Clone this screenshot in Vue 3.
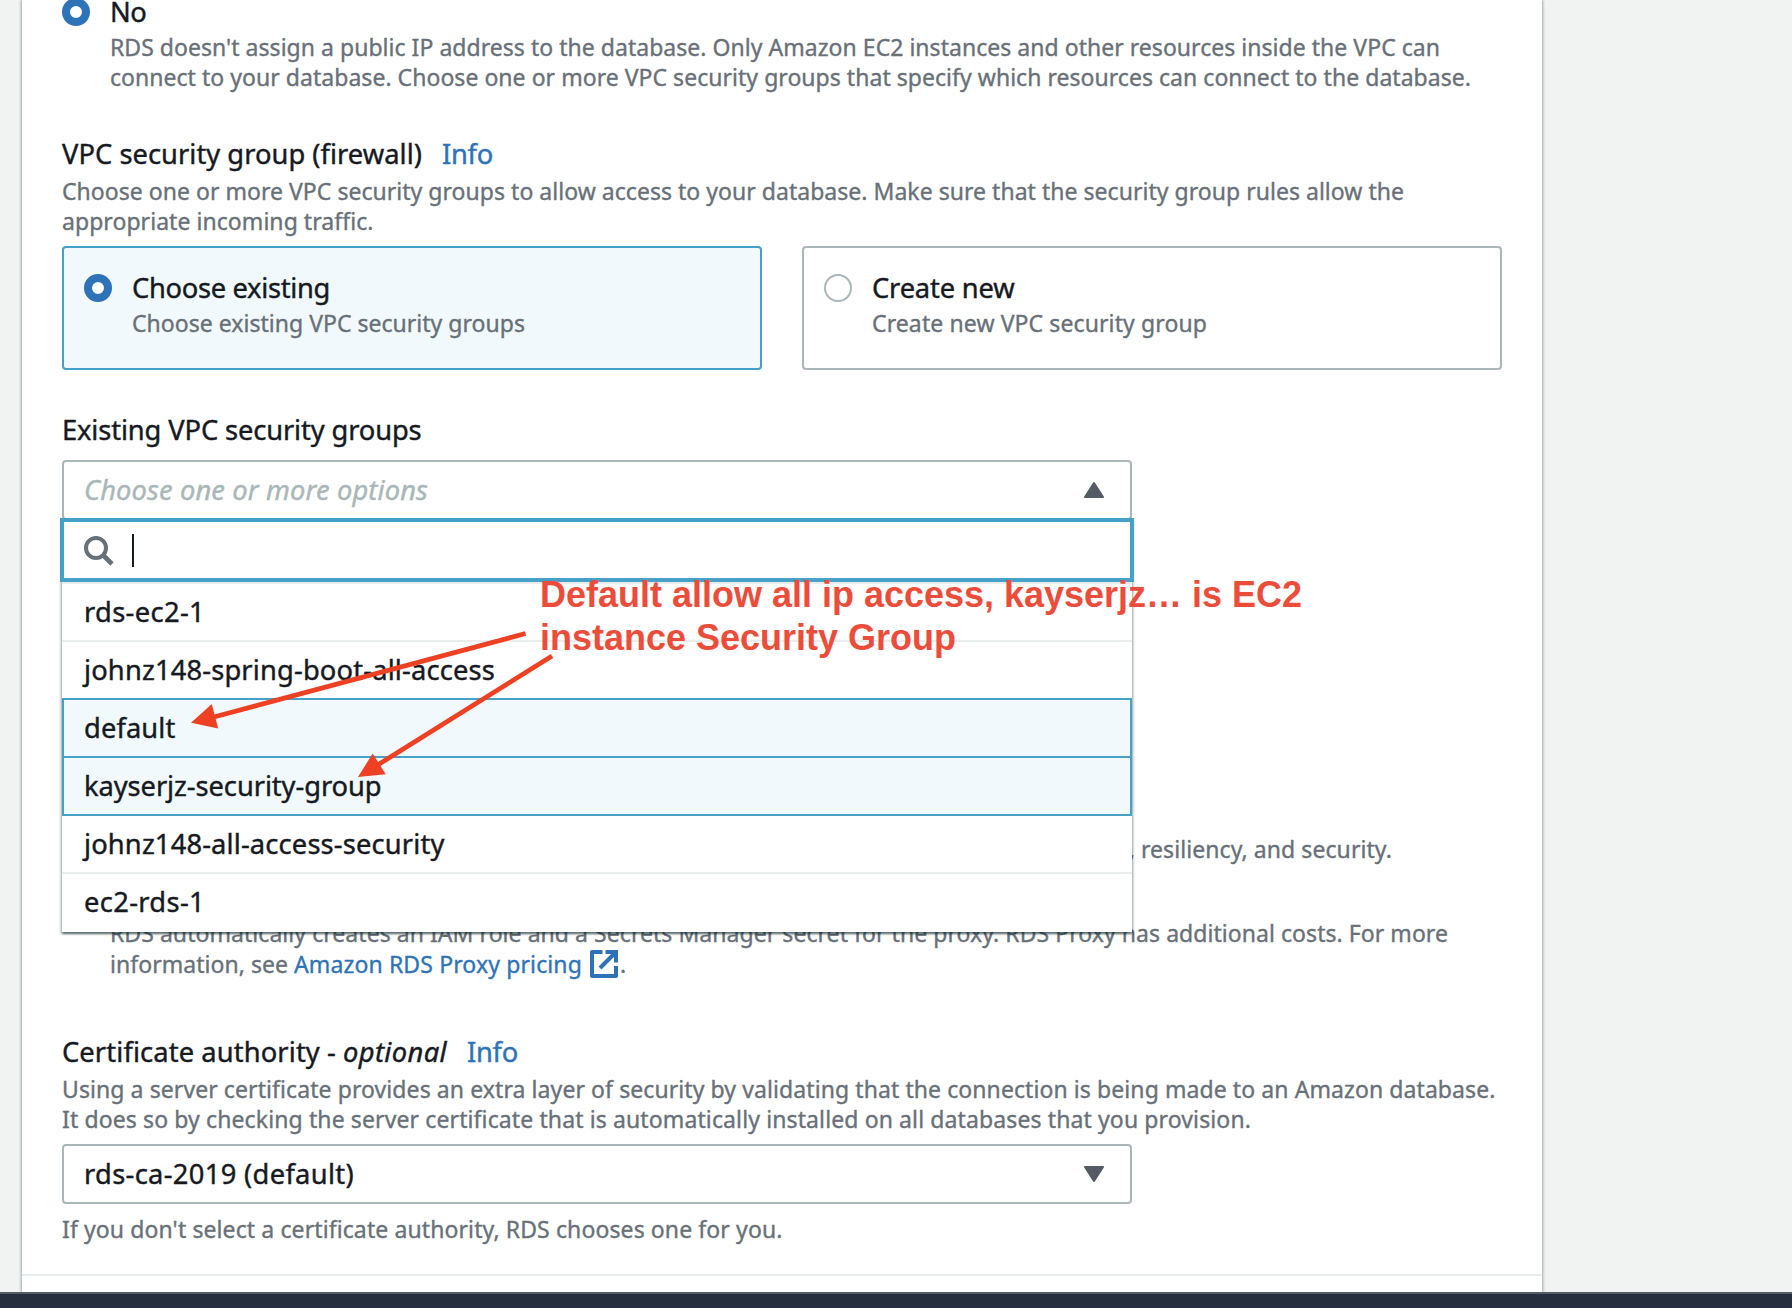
<script setup>
// Tracks a line of text so that it spans the given width in pixels.
const vFit = {
  mounted(el, { value }) {
    const natural = el.getBoundingClientRect().width
    el.style.letterSpacing = (value - natural) / el.textContent.length + 'px'
  },
}

const groups = [
  { name: 'rds-ec2-1', width: 121 },
  { name: 'johnz148-spring-boot-all-access', width: 411 },
  { name: 'default', width: 91.5, selected: true },
  { name: 'kayserjz-security-group', width: 297.5, selected: true },
  { name: 'johnz148-all-access-security', width: 360.5 },
  { name: 'ec2-rds-1', width: 121 },
]

const tiles = [
  { title: 'Choose existing', tw: 198, text: 'Choose existing VPC security groups', w: 393, on: true },
  { title: 'Create new', tw: 142.5, text: 'Create new VPC security group', w: 335, on: false },
]
</script>

<template>
  <div class="page">
    <main class="panel">
      <section class="choice">
        <span class="radio on"></span>
        <div class="choice-body">
          <div class="label"><span v-fit="36.5">No</span></div>
          <div class="desc gap-s">
            <span v-fit="1330">RDS doesn't assign a public IP address to the database. Only Amazon EC2 instances and other resources inside the VPC can</span>
          </div>
          <div class="desc">
            <span v-fit="1361">connect to your database. Choose one or more VPC security groups that specify which resources can connect to the database.</span>
          </div>
        </div>
      </section>

      <section class="firewall">
        <div class="label head">
          <span v-fit="360">VPC security group (firewall)</span>
          <a v-fit="51">Info</a>
        </div>
        <div class="desc"><span v-fit="1342">Choose one or more VPC security groups to allow access to your database. Make sure that the security group rules allow the</span></div>
        <div class="desc"><span v-fit="311.5">appropriate incoming traffic.</span></div>
        <div class="tiles">
          <div v-for="t in tiles" :key="t.title" class="tile" :class="{ active: t.on }">
            <span class="radio" :class="{ on: t.on }"></span>
            <div>
              <div class="label"><span v-fit="t.tw">{{ t.title }}</span></div>
              <div class="desc gap-s"><span v-fit="t.w">{{ t.text }}</span></div>
            </div>
          </div>
        </div>
      </section>

      <section class="existing">
        <div class="label"><span v-fit="359.5">Existing VPC security groups</span></div>
        <div class="select">
          <span v-fit="344" class="placeholder">Choose one or more options</span>
          <svg width="20" height="16" viewBox="0 0 20 16"><path d="M10 1 19 15H1Z" fill="#545b64" stroke="#545b64" stroke-width="2" stroke-linejoin="round" /></svg>
          <div class="dropdown">
            <div class="search">
              <svg width="30" height="30" viewBox="0 0 30 30" fill="none" stroke="#687078" stroke-width="4">
                <circle cx="12" cy="12" r="10" />
                <path d="M19 19 28 28" stroke-width="4.6" />
              </svg>
              <span class="caret"></span>
            </div>
            <div v-for="g in groups" :key="g.name" class="option label" :class="{ selected: g.selected }">
              <span v-fit="g.width">{{ g.name }}</span>
            </div>
          </div>
        </div>
      </section>

      <section class="proxy">
        <div class="desc scaling"><span v-fit="1326">RDS Proxy is a fully managed, highly available database proxy that improves application scalability, resiliency, and security.</span></div>
        <div class="proxy-note">
          <div class="desc"><span v-fit="1338">RDS automatically creates an IAM role and a Secrets Manager secret for the proxy. RDS Proxy has additional costs. For more</span></div>
          <div class="desc pricing">
            <span v-fit="178">information, see</span>
            <a v-fit="288">Amazon RDS Proxy pricing</a>
            <svg width="28" height="28" viewBox="0 0 28 28" fill="none" stroke="#2e73b8" stroke-width="4">
              <path d="M12.5 2H2V26H26V16" stroke-linejoin="round" />
              <path d="M15.5 2H26V12.5" />
              <path d="M25 3 10 18" />
            </svg>
            <span>.</span>
          </div>
        </div>
      </section>

      <section class="authority">
        <div class="label head">
          <span v-fit="274">Certificate authority -</span>
          <i v-fit="104">optional</i>
          <a v-fit="51">Info</a>
        </div>
        <div class="desc"><span v-fit="1433.5">Using a server certificate provides an extra layer of security by validating that the connection is being made to an Amazon database.</span></div>
        <div class="desc"><span v-fit="1189">It does so by checking the server certificate that is automatically installed on all databases that you provision.</span></div>
        <div class="select">
          <span v-fit="270" class="label">rds-ca-2019 (default)</span>
          <svg width="20" height="16" viewBox="0 0 20 16"><path d="M10 15 19 1H1Z" fill="#545b64" stroke="#545b64" stroke-width="2" stroke-linejoin="round" /></svg>
        </div>
        <div class="desc hint"><span v-fit="720.5">If you don't select a certificate authority, RDS chooses one for you.</span></div>
      </section>
    </main>
    <footer></footer>

    <svg class="arrows" width="1792" height="1308" viewBox="0 0 1792 1308">
      <g stroke="#ee4023" stroke-width="4.8">
        <path d="M525.5 633.5 212 717.5" />
        <path d="M552 656 376 766" />
      </g>
      <g fill="#ee4023">
        <path d="M191 722.8 211.8 704 218.2 728.4Z" />
        <path d="M358 777 372.7 753.5 385.7 774.2Z" />
      </g>
    </svg>
    <div class="remark">
      <div><span v-fit="762">Default allow all ip access, kayserjz… is EC2</span></div>
      <div><span v-fit="416">instance Security Group</span></div>
    </div>
  </div>
</template>

<style>
body {
  overflow: hidden;
}
</style>

<style scoped>
.page {
  position: relative;
  width: 1792px;
  height: 1308px;
  overflow: hidden;
  display: flex;
  flex-direction: column;
  background: #f1f3f3;
  color: #16191f;
  font-family: "Noto Sans", "Open Sans", sans-serif;
  white-space: nowrap;
}
.page * {
  box-sizing: border-box;
}
.panel {
  width: 1520px;
  height: 1292px;
  flex: none;
  margin-left: 22px;
  padding: 0 40px;
  background: #fff;
  box-shadow: 0 0 2px rgba(0, 28, 36, 0.3), 2px 0 2px rgba(0, 28, 36, 0.15), -2px 0 2px rgba(0, 28, 36, 0.15);
}
footer {
  position: relative;
  height: 16px;
  flex: none;
  background: #262f3e;
  border-top: 2px solid #545b64;
}
.label {
  font-size: 27.3px;
  line-height: 36px;
  height: 36px;
  -webkit-text-stroke: 0.4px currentColor;
}
.desc {
  font-size: 23px;
  line-height: 30px;
  height: 30px;
  color: #687078;
  -webkit-text-stroke: 0.35px currentColor;
}
.label span,
.desc span,
a,
i {
  display: inline-block;
}
a {
  color: #2e73b8;
}
.gap-s {
  margin-top: 2px;
}
.choice {
  display: flex;
  margin-top: -6px;
  height: 98px;
}
.radio {
  width: 28px;
  height: 28px;
  flex: none;
  border: 2px solid #aab7b8;
  border-radius: 50%;
  background: #fff;
}
.radio.on {
  border: 8px solid #2e73b8;
}
.choice .radio {
  margin: 4px 20px 0 0;
}
.firewall {
  padding-top: 44px;
}
.head {
  display: flex;
  margin-bottom: 4px;
}
.head a {
  margin-left: 20px;
}
.head i {
  margin-left: 7px;
}
.tiles {
  display: flex;
  gap: 40px;
  margin-top: 10px;
}
.tile {
  width: 700px;
  height: 124px;
  display: flex;
  gap: 20px;
  padding: 22px 20px;
  border: 2px solid #aab7b8;
  border-radius: 4px;
}
.tile.active {
  border-color: #46a0c8;
  background: #f2f9fd;
}
.tile .radio {
  margin-top: 4px;
}
.existing {
  padding-top: 42px;
}
.select {
  position: relative;
  width: 1070px;
  height: 60px;
  display: flex;
  align-items: center;
  justify-content: space-between;
  padding: 0 26px 0 20px;
  border: 2px solid #aab7b8;
  border-radius: 4px;
}
.existing .select {
  margin-top: 12px;
}
.placeholder {
  font-size: 27.3px;
  line-height: 36px;
  font-style: italic;
  color: #aab7b8;
  -webkit-text-stroke: 0.4px currentColor;
}
.dropdown {
  position: absolute;
  left: -2px;
  top: 56px;
  width: 1070px;
  height: 414px;
  z-index: 2;
  background: #fff;
  box-shadow: 0 2px 2px rgba(0, 28, 36, 0.5), 2px 2px 2px rgba(0, 28, 36, 0.15), -2px 2px 2px rgba(0, 28, 36, 0.15);
}
.search {
  display: flex;
  align-items: center;
  width: 1074px;
  height: 64px;
  margin-left: -2px;
  padding-left: 20px;
  border: 4px solid #46a0c8;
}
.search svg {
  margin-top: 2px;
}
.caret {
  width: 2px;
  height: 33px;
  margin-left: 18px;
  background: #16191f;
}
.option {
  height: 58px;
  padding: 10px 22px 0;
  border-top: 2px solid #eaeded;
}
.option.selected {
  height: 60px;
  margin-bottom: -2px;
  padding: 10px 20px 0;
  border: 2px solid #46a0c8;
  background: #f2f9fd;
}
.option.selected + .option:not(.selected) {
  border-top-color: transparent;
  background-clip: padding-box;
}
.proxy {
  padding-top: 314px;
}
.scaling {
  padding-left: 4px;
}
.proxy-note {
  margin: 54px 0 0 48px;
}
.pricing {
  display: flex;
  margin-top: 1px;
}
.pricing a {
  margin-left: 6px;
}
.pricing svg {
  margin: 1px 2px 0 8px;
}
.authority {
  padding-top: 55px;
}
.authority .select {
  margin-top: 10px;
}
.hint {
  margin-top: 10px;
  height: 60px;
}
.authority::after {
  content: "";
  display: block;
  height: 2px;
  margin: 0 -40px;
  background: #eaeded;
}
.arrows {
  position: absolute;
  inset: 0;
  z-index: 3;
}
.remark {
  position: absolute;
  left: 540px;
  top: 573px;
  z-index: 4;
  font: bold 36px/43px "Liberation Sans", Arial, sans-serif;
  color: #ec4d3b;
}
.remark span {
  display: inline-block;
}
</style>
